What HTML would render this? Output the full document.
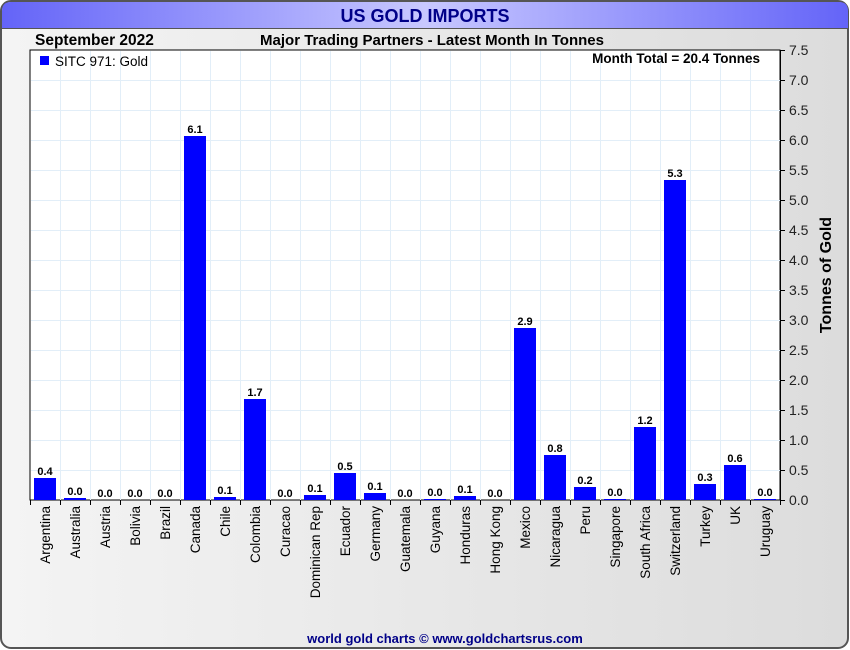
<!DOCTYPE html>
<html><head><style>
html,body{margin:0;padding:0;background:#fff}
svg{display:block;font-family:"Liberation Sans",Arial,sans-serif}
</style></head><body>
<svg width="850" height="650" viewBox="0 0 850 650" xmlns="http://www.w3.org/2000/svg">
<defs>
<linearGradient id="hd" x1="0" x2="1" y1="0" y2="0"><stop offset="0" stop-color="#6464f8"/><stop offset="0.5" stop-color="#c8c8ff"/><stop offset="1" stop-color="#6464f8"/></linearGradient>
<linearGradient id="bg" x1="0" x2="1" y1="0" y2="0"><stop offset="0" stop-color="#f4f4f4"/><stop offset="1" stop-color="#dcdcdc"/></linearGradient>
</defs>
<rect x="1" y="1" width="847" height="647" rx="10" fill="url(#bg)" stroke="#555" stroke-width="2"/>
<path d="M2,28 L2,11 Q2,2 11,2 L839,2 Q848,2 848,11 L848,28 Z" fill="url(#hd)"/>
<line x1="2" y1="28.5" x2="848" y2="28.5" stroke="#555"/>
<text x="425" y="22" text-anchor="middle" font-size="18" font-weight="bold" fill="#000088">US GOLD IMPORTS</text>
<text x="35" y="45" font-size="15.5" font-weight="bold">September 2022</text>
<text x="432" y="45" text-anchor="middle" font-size="15" font-weight="bold">Major Trading Partners - Latest Month In Tonnes</text>
<rect x="30" y="50" width="750" height="450" fill="#fff" stroke="#000"/>
<g stroke="#e2eef8" stroke-width="1">
<path d="M60.5 51V500M90.5 51V500M120.5 51V500M150.5 51V500M180.5 51V500M210.5 51V500M240.5 51V500M270.5 51V500M300.5 51V500M330.5 51V500M360.5 51V500M390.5 51V500M420.5 51V500M450.5 51V500M480.5 51V500M510.5 51V500M540.5 51V500M570.5 51V500M600.5 51V500M630.5 51V500M660.5 51V500M690.5 51V500M720.5 51V500M750.5 51V500"/>
<path d="M31 80.5H780M31 110.5H780M31 140.5H780M31 170.5H780M31 200.5H780M31 230.5H780M31 260.5H780M31 290.5H780M31 320.5H780M31 350.5H780M31 380.5H780M31 410.5H780M31 440.5H780M31 470.5H780"/>
</g>
<rect x="40" y="56" width="9" height="9" fill="#0000ff"/>
<text x="55" y="66" font-size="13.5">SITC 971: Gold</text>
<text x="760" y="63" text-anchor="end" font-size="13.5" font-weight="bold">Month Total = 20.4 Tonnes</text>
<g fill="#0000ff">
<rect x="34" y="478" width="22" height="22"/>
<rect x="64" y="498" width="22" height="2"/>
<rect x="184" y="136" width="22" height="364"/>
<rect x="214" y="497" width="22" height="3"/>
<rect x="244" y="399" width="22" height="101"/>
<rect x="304" y="495" width="22" height="5"/>
<rect x="334" y="473" width="22" height="27"/>
<rect x="364" y="493" width="22" height="7"/>
<rect x="424" y="499" width="22" height="1"/>
<rect x="454" y="496" width="22" height="4"/>
<rect x="514" y="328" width="22" height="172"/>
<rect x="544" y="455" width="22" height="45"/>
<rect x="574" y="487" width="22" height="13"/>
<rect x="604" y="499" width="22" height="1"/>
<rect x="634" y="427" width="22" height="73"/>
<rect x="664" y="180" width="22" height="320"/>
<rect x="694" y="484" width="22" height="16"/>
<rect x="724" y="465" width="22" height="35"/>
<rect x="754" y="499" width="22" height="1"/>
</g>
<g font-size="11" font-weight="bold" text-anchor="middle">
<text x="45" y="475">0.4</text><text x="75" y="495">0.0</text><text x="105" y="497">0.0</text><text x="135" y="497">0.0</text><text x="165" y="497">0.0</text><text x="195" y="133">6.1</text><text x="225" y="494">0.1</text><text x="255" y="396">1.7</text><text x="285" y="497">0.0</text><text x="315" y="492">0.1</text><text x="345" y="470">0.5</text><text x="375" y="490">0.1</text><text x="405" y="497">0.0</text><text x="435" y="496">0.0</text><text x="465" y="493">0.1</text><text x="495" y="497">0.0</text><text x="525" y="325">2.9</text><text x="555" y="452">0.8</text><text x="585" y="484">0.2</text><text x="615" y="496">0.0</text><text x="645" y="424">1.2</text><text x="675" y="177">5.3</text><text x="705" y="481">0.3</text><text x="735" y="462">0.6</text><text x="765" y="496">0.0</text>
</g>
<g stroke="#000"><path d="M780.5 50V500M780 50.5H785M780 80.5H785M780 110.5H785M780 140.5H785M780 170.5H785M780 200.5H785M780 230.5H785M780 260.5H785M780 290.5H785M780 320.5H785M780 350.5H785M780 380.5H785M780 410.5H785M780 440.5H785M780 470.5H785M780 500.5H785"/>
<path d="M30.5 500V505M60.5 500V505M90.5 500V505M120.5 500V505M150.5 500V505M180.5 500V505M210.5 500V505M240.5 500V505M270.5 500V505M300.5 500V505M330.5 500V505M360.5 500V505M390.5 500V505M420.5 500V505M450.5 500V505M480.5 500V505M510.5 500V505M540.5 500V505M570.5 500V505M600.5 500V505M630.5 500V505M660.5 500V505M690.5 500V505M720.5 500V505M750.5 500V505M780.5 500V505"/></g>
<g font-size="14" fill="#222">
<text x="789" y="55">7.5</text><text x="789" y="85">7.0</text><text x="789" y="115">6.5</text><text x="789" y="145">6.0</text><text x="789" y="175">5.5</text><text x="789" y="205">5.0</text><text x="789" y="235">4.5</text><text x="789" y="265">4.0</text><text x="789" y="295">3.5</text><text x="789" y="325">3.0</text><text x="789" y="355">2.5</text><text x="789" y="385">2.0</text><text x="789" y="415">1.5</text><text x="789" y="445">1.0</text><text x="789" y="475">0.5</text><text x="789" y="505">0.0</text>
</g>
<text transform="translate(831,275) rotate(-90)" text-anchor="middle" font-size="16" font-weight="bold">Tonnes of Gold</text>
<g font-size="13.5" text-anchor="end">
<text transform="translate(50,506) rotate(-90)">Argentina</text>
<text transform="translate(80,506) rotate(-90)">Australia</text>
<text transform="translate(110,506) rotate(-90)">Austria</text>
<text transform="translate(140,506) rotate(-90)">Bolivia</text>
<text transform="translate(170,506) rotate(-90)">Brazil</text>
<text transform="translate(200,506) rotate(-90)">Canada</text>
<text transform="translate(230,506) rotate(-90)">Chile</text>
<text transform="translate(260,506) rotate(-90)">Colombia</text>
<text transform="translate(290,506) rotate(-90)">Curacao</text>
<text transform="translate(320,506) rotate(-90)">Dominican Rep</text>
<text transform="translate(350,506) rotate(-90)">Ecuador</text>
<text transform="translate(380,506) rotate(-90)">Germany</text>
<text transform="translate(410,506) rotate(-90)">Guatemala</text>
<text transform="translate(440,506) rotate(-90)">Guyana</text>
<text transform="translate(470,506) rotate(-90)">Honduras</text>
<text transform="translate(500,506) rotate(-90)">Hong Kong</text>
<text transform="translate(530,506) rotate(-90)">Mexico</text>
<text transform="translate(560,506) rotate(-90)">Nicaragua</text>
<text transform="translate(590,506) rotate(-90)">Peru</text>
<text transform="translate(620,506) rotate(-90)">Singapore</text>
<text transform="translate(650,506) rotate(-90)">South Africa</text>
<text transform="translate(680,506) rotate(-90)">Switzerland</text>
<text transform="translate(710,506) rotate(-90)">Turkey</text>
<text transform="translate(740,506) rotate(-90)">UK</text>
<text transform="translate(770,506) rotate(-90)">Uruguay</text>
</g>
<text x="445" y="643" text-anchor="middle" font-size="13" font-weight="bold" fill="#000088">world gold charts © www.goldchartsrus.com</text>
</svg>
</body></html>
